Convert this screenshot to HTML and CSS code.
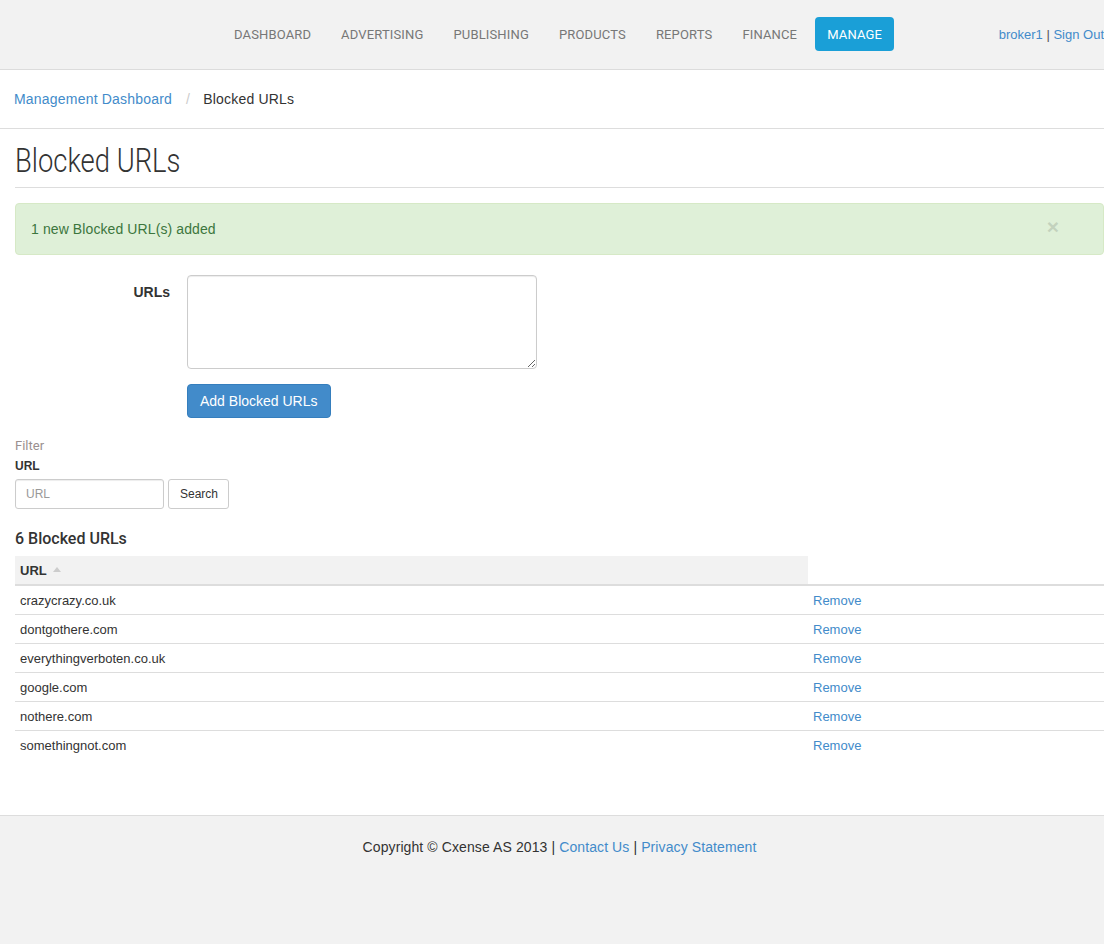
FILE: index.html
```html
<!DOCTYPE html>
<html lang="en">
<head>
<meta charset="UTF-8">
<meta name="viewport" content="width=device-width, initial-scale=1.0">
<title>Blocked URLs</title>
<link rel="stylesheet" href="styles.css">
</head>
<body>

<div class="page">
    <!-- Top navigation -->
    <div class="navbar">
        <div></div>
        <ul class="nav">
            <li><a href="#">Dashboard</a></li>
            <li><a href="#">Advertising</a></li>
            <li><a href="#">Publishing</a></li>
            <li><a href="#">Products</a></li>
            <li><a href="#">Reports</a></li>
            <li><a href="#">Finance</a></li>
            <li class="active"><a href="#">Manage</a></li>
        </ul>
        <div class="user">
            <a href="#">broker1</a> | <a href="#">Sign Out</a>
        </div>
    </div>

    <!-- Breadcrumb -->
    <div class="breadcrumb">
        <a href="#">Management Dashboard</a>
        <span class="sep">/</span>
        <span>Blocked URLs</span>
    </div>

    <div class="content">
        <h1 class="page-header"><span>Blocked URLs</span></h1>

        <div class="alert">
            1 new Blocked URL(s) added
            <span class="close">&times;</span>
        </div>

        <form class="form-add">
            <label for="urls">URLs</label>
            <div>
                <textarea id="urls" name="urls"></textarea>
                <button type="submit" class="btn btn-primary">Add Blocked URLs</button>
            </div>
        </form>

        <!-- Filter -->
        <form class="filter">
            <div class="filter-title">Filter</div>
            <label for="url">URL</label>
            <div class="filter-row">
                <input type="text" id="url" placeholder="URL">
                <button type="submit" class="btn btn-default">Search</button>
            </div>
        </form>

        <h4 class="count">6 Blocked URLs</h4>

        <table class="table" id="urlTable">
            <thead>
                <tr>
                    <th class="sorted">URL <span class="caret-up"></span></th>
                    <th class="blank"></th>
                </tr>
            </thead>
            <tbody>
                <tr><td>crazycrazy.co.uk</td><td><a href="#">Remove</a></td></tr>
                <tr><td>dontgothere.com</td><td><a href="#">Remove</a></td></tr>
                <tr><td>everythingverboten.co.uk</td><td><a href="#">Remove</a></td></tr>
                <tr><td>google.com</td><td><a href="#">Remove</a></td></tr>
                <tr><td>nothere.com</td><td><a href="#">Remove</a></td></tr>
                <tr><td>somethingnot.com</td><td><a href="#">Remove</a></td></tr>
            </tbody>
        </table>
    </div>

    <div class="footer">
        Copyright &copy; Cxense AS 2013 | <a href="#">Contact Us</a> | <a href="#">Privacy Statement</a>
    </div>
</div>

</body>
</html>
```

FILE: styles.css
```css
body {
    font-family: "Liberation Sans", Arial, sans-serif;
    font-size: 14px;
    color: #333;
    margin: 0;
    padding: 0;
    overflow-x: hidden;
}

a {
    color: #428bca;
    text-decoration: none;
}

.page {
    width: 1119px;
    min-height: 100vh;
    display: flex;
    flex-direction: column;
}

/* navbar */
.navbar {
    height: 68px;
    padding: 0 15px 1px;
    background-color: #f2f2f2;
    border-bottom: 1px solid #dcdcdc;
    display: grid;
    grid-template-columns: 1fr auto 1fr;
    align-items: center;
}

.nav {
    list-style: none;
    margin: 0 0 0 -3px;
    padding: 0;
    display: flex;
    gap: 6px;
}

.nav a {
    display: block;
    padding: 1px 12px 0;
    line-height: 33px;
    font-family: Roboto, sans-serif;
    font-size: 13px;
    letter-spacing: 0.15px;
    text-transform: uppercase;
    color: #777;
    border-radius: 4px;
}

.nav .active a {
    background-color: #1a9fd7;
    color: #fff;
}

.user {
    justify-self: end;
    font-size: 13px;
    color: #555;
}

/* breadcrumb */
.breadcrumb {
    height: 58px;
    padding: 0 14px;
    display: flex;
    align-items: center;
    border-bottom: 1px solid #ddd;
    font-size: 14px;
    letter-spacing: 0.2px;
}

.breadcrumb .sep {
    color: #ccc;
    padding: 0 13px 0 14px;
}

.content {
    padding: 0 15px;
}

.page-header {
    font-family: Roboto, sans-serif;
    font-weight: 300;
    font-size: 33px;
    line-height: 40px;
    margin: 12px 0 0;
    padding-bottom: 6px;
    border-bottom: 1px solid #ddd;
    color: #333;
}

.page-header span {
    display: inline-block;
    transform: scaleX(0.83);
    transform-origin: left center;
}

.alert {
    position: relative;
    margin-top: 15px;
    padding: 15px;
    line-height: 20px;
    background-color: #dff0d8;
    border: 1px solid #d6e9c6;
    border-radius: 4px;
    color: #3c763d;
    letter-spacing: 0.1px;
}

.close {
    position: absolute;
    right: 44px;
    top: 13px;
    font-size: 21px;
    font-weight: bold;
    line-height: 20px;
    color: #000;
    opacity: 0.12;
}

/* add form */
.form-add {
    display: grid;
    grid-template-columns: 155px 1fr;
    gap: 17px;
    margin-top: 20px;
}

.form-add label {
    text-align: right;
    font-weight: bold;
    padding-top: 9px;
}

textarea {
    display: block;
    width: 350px;
    height: 94px;
    box-sizing: border-box;
    border: 1px solid #ccc;
    border-radius: 4px;
    box-shadow: inset 0 1px 1px rgba(0,0,0,.075);
    resize: vertical;
}

.btn {
    font-family: "Liberation Sans", Arial, sans-serif;
    border-radius: 4px;
    cursor: pointer;
    border: 1px solid #ccc;
}

.btn-primary {
    margin-top: 15px;
    height: 34px;
    padding: 0 12px;
    font-size: 14px;
    background-color: #428bca;
    border-color: #357ebd;
    color: #fff;
}

/* filter */
.filter {
    margin-top: 20px;
}

.filter-title {
    font-family: Roboto, sans-serif;
    font-size: 13px;
    color: #9a9090;
    line-height: 16px;
}

.filter label {
    display: block;
    font-size: 12px;
    font-weight: bold;
    margin-top: 4px;
    line-height: 16px;
}

.filter-row {
    display: flex;
    gap: 4px;
    margin-top: 5px;
}

.filter input {
    width: 149px;
    height: 30px;
    box-sizing: border-box;
    padding: 5px 10px;
    font-size: 12px;
    font-family: "Liberation Sans", Arial, sans-serif;
    border: 1px solid #ccc;
    border-radius: 3px;
    box-shadow: inset 0 1px 1px rgba(0,0,0,.075);
}

.filter input::placeholder {
    color: #999;
}

.btn-default {
    height: 30px;
    padding: 0 10px 0 11px;
    font-size: 12px;
    background-color: #fff;
    color: #333;
    border-radius: 3px;
}

.count {
    font-family: Roboto, sans-serif;
    font-weight: 500;
    font-size: 16px;
    line-height: 20px;
    margin: 20px 0 7px;
}

/* table */
.table {
    width: 100%;
    border-collapse: collapse;
    font-size: 13px;
}

.table th {
    text-align: left;
    font-weight: bold;
    height: 28px;
    padding: 0 5px;
    border-bottom: 2px solid #ddd;
}

.table th.sorted {
    width: 783px;
    background-color: #f2f2f2;
}

.caret-up {
    display: inline-block;
    margin-left: 3px;
    vertical-align: 3px;
    border-left: 4px solid transparent;
    border-right: 4px solid transparent;
    border-bottom: 5px solid #ccc;
}

.table td {
    padding: 6px 5px 4px;
    line-height: 18px;
    border-top: 1px solid #ddd;
}

.table tbody tr:first-child td {
    border-top: none;
}

/* footer */
.footer {
    flex: 1;
    margin-top: 56px;
    background-color: #f2f2f2;
    border-top: 1px solid #ddd;
    text-align: center;
    padding-top: 21px;
    line-height: 20px;
    letter-spacing: 0.1px;
}
```
